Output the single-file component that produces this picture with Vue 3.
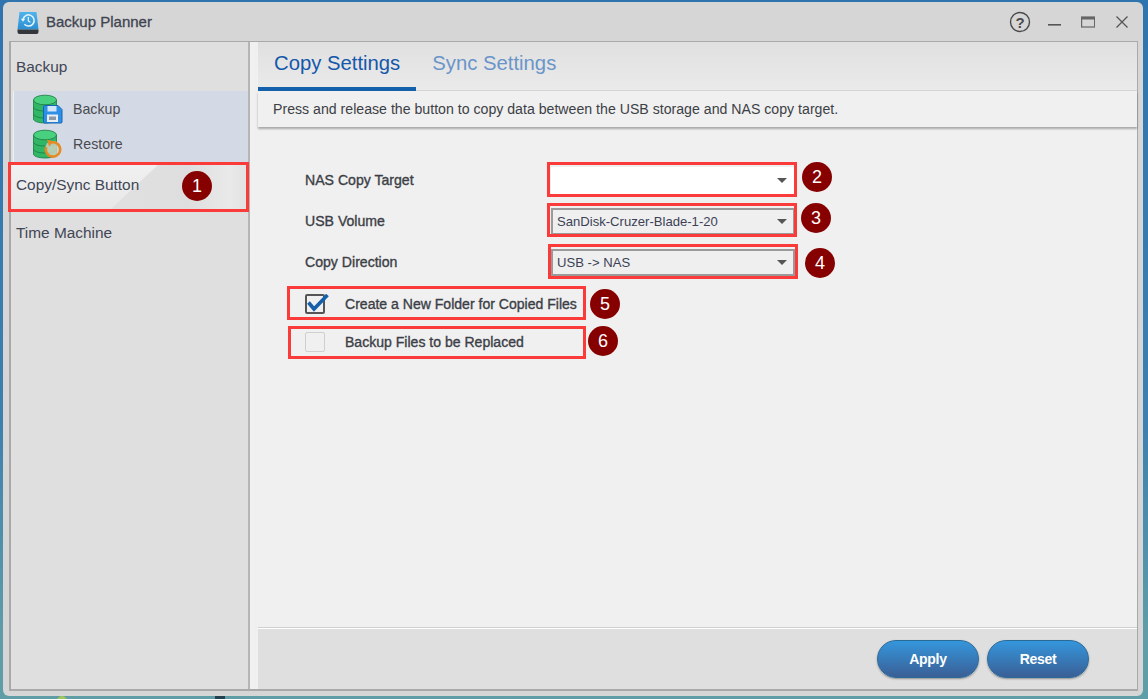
<script setup>
const rows = [
  { label: 'NAS Copy Target', value: '', blank: true },
  { label: 'USB Volume', value: 'SanDisk-Cruzer-Blade-1-20' },
  { label: 'Copy Direction', value: 'USB -> NAS' },
]
</script>

<template>
  <div class="desktop">
    <i class="deco-dot"></i>
    <i class="deco-dark"></i>
    <div class="window">
      <header class="titlebar">
        <svg class="logo" viewBox="0 0 24 24" width="24" height="24">
          <defs>
            <linearGradient id="lg" x1="0" y1="0" x2="0" y2="1"><stop offset="0" stop-color="#4fb4ec"/><stop offset="1" stop-color="#2b8ed2"/></linearGradient>
          </defs>
          <path d="M3.500 1h17l2 17.500H1.500z" fill="url(#lg)"/>
          <path d="M1.500 18.500h21v2.500a2 2 0 0 1-2 2h-17a2 2 0 0 1-2-2z" fill="#33363a"/>
          <path d="M7 8.500a5.600 5.600 0 1 1 1.400 4.800" fill="none" stroke="#e6f4fc" stroke-width="1.500"/>
          <path d="M4.800 7.800h4.400l-2.200 3z" fill="#e6f4fc"/>
          <path d="M12.300 6v3.900l2.200 1.400" fill="none" stroke="#e6f4fc" stroke-width="1.200"/>
        </svg>
        <span class="app-title">Backup Planner</span>
        <div class="controls">
          <svg class="help" width="22" height="22" viewBox="0 0 22 22"><circle cx="11" cy="11" r="9.500" fill="none" stroke="#4a4a4a" stroke-width="1.400"/><text x="11" y="16.500" text-anchor="middle" class="qmark">?</text></svg>
          <svg width="14" height="14" viewBox="0 0 14 14"><rect x="1" y="9" width="13" height="1.600" fill="#555"/></svg>
          <svg width="14" height="14" viewBox="0 0 14 14"><rect x=".6" y="2" width="13" height="10" fill="none" stroke="#666" stroke-width="1.200"/><rect x=".6" y="2" width="13" height="2.500" fill="#666"/></svg>
          <svg width="14" height="14" viewBox="0 0 14 14"><path d="M1.500 1.500l11 11M12.500 1.500l-11 11" stroke="#555" stroke-width="1.300" fill="none"/></svg>
        </div>
      </header>

      <div class="panel">
        <aside class="sidebar">
          <div class="nav-head">Backup</div>
          <div class="subnav">
            <div class="subitem">
              <svg class="db" viewBox="0 0 30 30" width="30" height="30">
                <g fill="#2fb765" stroke="#1c7a40" stroke-width=".8">
                  <path d="M.5 20v5c0 2.300 5 4 11.500 4s11.500-1.700 11.500-4v-5z"/>
                  <path d="M.5 13v7c0 2.300 5 4 11.500 4s11.500-1.700 11.500-4v-7z"/>
                  <path d="M.5 6v7c0 2.300 5 4 11.500 4s11.500-1.700 11.500-4V6z"/>
                  <ellipse cx="12" cy="6" rx="11.500" ry="4.800" fill="#49d07f"/>
                </g>
                <path d="M10.500 12.500a1 1 0 0 1 1-1h13.500l4 4v12.500a1 1 0 0 1-1 1H11.500a1 1 0 0 1-1-1z" fill="#2e8fe6" stroke="#1565b5"/>
                <rect x="14.500" y="12" width="9" height="5.500" fill="#cfe6fa"/>
                <rect x="14" y="20.500" width="11" height="7.500" fill="#e8eef3"/>
                <rect x="16" y="22.500" width="7" height="3.500" fill="#8c99a5"/>
              </svg>
              <span>Backup</span>
            </div>
            <div class="subitem">
              <svg class="db" viewBox="0 0 30 30" width="30" height="30">
                <g fill="#2fb765" stroke="#1c7a40" stroke-width=".8">
                  <path d="M.5 20v5c0 2.300 5 4 11.500 4s11.500-1.700 11.500-4v-5z"/>
                  <path d="M.5 13v7c0 2.300 5 4 11.500 4s11.500-1.700 11.500-4v-7z"/>
                  <path d="M.5 6v7c0 2.300 5 4 11.500 4s11.500-1.700 11.500-4V6z"/>
                  <ellipse cx="12" cy="6" rx="11.500" ry="4.800" fill="#49d07f"/>
                </g>
                <circle cx="20" cy="20" r="8" fill="#d8d4c8" opacity=".8"/>
                <path d="M18 13.500a7.200 7.200 0 1 1-4.800 4.500" fill="none" stroke="#e88a24" stroke-width="2.600"/>
                <path d="M14 10.500l6.500 2-4.500 5z" fill="#e88a24"/>
              </svg>
              <span>Restore</span>
            </div>
          </div>
          <div class="nav-item active">Copy/Sync Button</div>
          <div class="nav-item">Time Machine</div>
        </aside>

        <main class="content">
          <nav class="tabs">
            <div class="tab on">Copy Settings</div>
            <div class="tab">Sync Settings</div>
          </nav>
          <p class="desc">Press and release the button to copy data between the USB storage and NAS copy target.</p>

          <section class="form">
            <div v-for="r in rows" :key="r.label" class="row">
              <label>{{ r.label }}</label>
              <div class="select" :class="{ blank: r.blank }">
                <span>{{ r.value }}</span>
                <i class="caret"></i>
              </div>
            </div>
            <div class="check-row first">
              <span class="box checked">
                <svg width="26" height="22" viewBox="0 0 26 22"><path d="M3.500 8.500l5.500 6.500L22.500 1" fill="none" stroke="#1560ab" stroke-width="3.600"/></svg>
              </span>
              <span class="check-label">Create a New Folder for Copied Files</span>
            </div>
            <div class="check-row">
              <span class="box"></span>
              <span class="check-label">Backup Files to be Replaced</span>
            </div>
          </section>

          <footer class="footer">
            <button class="btn">Apply</button>
            <button class="btn">Reset</button>
          </footer>
        </main>
      </div>
    </div>

    <div class="mark r1"></div>
    <div class="mark r2"></div>
    <div class="mark r3"></div>
    <div class="mark r4"></div>
    <div class="mark r5"></div>
    <div class="mark r6"></div>
    <div class="num n1">1</div>
    <div class="num n2">2</div>
    <div class="num n3">3</div>
    <div class="num n4">4</div>
    <div class="num n5">5</div>
    <div class="num n6">6</div>
  </div>
</template>

<style>
html, body { margin: 0; padding: 0; overflow: hidden; }
</style>

<style scoped>
.desktop {
  position: relative;
  width: 1148px;
  height: 699px;
  box-sizing: border-box;
  padding: 2px 5px 3px 3px;
  background: linear-gradient(180deg, #2f74ae 0%, #3d7fae 60%, #5f9ca8 90%, #5f9ea6 100%);
  font-family: "Liberation Sans", Arial, sans-serif;
  color: #3a3f4a;
  overflow: hidden;
}
.deco-dot {
  position: absolute;
  left: 57px;
  top: 696px;
  width: 10px;
  height: 10px;
  border-radius: 50%;
  background: #a3c65a;
}
.deco-dark {
  position: absolute;
  left: 215px;
  top: 696px;
  width: 10px;
  height: 4px;
  background: #23404f;
}
.window {
  position: relative;
  height: 100%;
  box-sizing: border-box;
  display: flex;
  flex-direction: column;
  background: #d6d6d6;
  border-radius: 6px;
  padding: 0 5px 5px 6px;
}
.titlebar {
  height: 39px;
  flex: none;
  display: flex;
  align-items: center;
  padding-left: 7px;
}
.logo { margin: 2px 6px 0 0; }
.app-title {
  font-size: 15px;
  color: #3e4450;
  -webkit-text-stroke: .3px #3e4450;
}
.controls {
  margin-left: auto;
  margin-right: 9px;
  display: flex;
  align-items: center;
  gap: 20px;
}
.help { margin-right: -4px; }
.qmark { font: 700 15px "Liberation Sans", Arial, sans-serif; fill: #4a4a4a; }
.panel {
  flex: 1;
  min-height: 0;
  display: flex;
  border: 1px solid #a9a9a9;
  border-width: 1px 1px 2px 2px;
  background: #f0f0f0;
}
.sidebar {
  width: 237px;
  flex: none;
  background: #dfdfdf;
  border-right: 2px solid #b5b5b5;
}
.nav-head {
  height: 49px;
  line-height: 50px;
  padding-left: 5px;
  font-size: 15.400px;
  color: #3f4656;
}
.subnav {
  background: #d3dae5;
  height: 71px;
  margin-left: 2px;
  box-sizing: border-box;
  border-left: 1px solid #eef0f3;
}
.subitem {
  height: 35px;
  display: flex;
  align-items: center;
  padding-left: 19px;
  font-size: 14.200px;
  color: #4a4a50;
}
.subitem span { margin-left: 10px; }
.db { flex: none; }
.nav-item {
  height: 47px;
  line-height: 48px;
  padding-left: 5px;
  font-size: 15.400px;
  color: #3f4656;
}
.nav-item.active {
  position: relative;
  isolation: isolate;
  line-height: 46px;
  background: linear-gradient(90deg, #e3e3e3 0%, #dedede 75%, #e9e9e9 92%, #e2e2e2 100%);
}
.nav-item.active::before {
  content: "";
  position: absolute;
  inset: 0;
  z-index: -1;
  background: linear-gradient(180deg, #f1f1f1, #e8e8e8);
  clip-path: polygon(0 0, 150px 0, 100px 100%, 0 100%);
}
.content {
  flex: 1;
  min-width: 0;
  padding-left: 8px;
  display: flex;
  flex-direction: column;
}
.tabs {
  height: 48px;
  flex: none;
  display: flex;
  background: linear-gradient(180deg, #e0e0e0, #eaeaea);
  border-bottom: 1px solid #d5d5d5;
}
.tab {
  height: 49px;
  box-sizing: border-box;
  padding: 10px 16px 0 16px;
  font-size: 20.300px;
  color: #6a95c9;
}
.tab.on {
  color: #1458ab;
  border-bottom: 4px solid #1560ab;
}
.desc {
  margin: 0;
  height: 36px;
  flex: none;
  box-sizing: border-box;
  padding: 10px 0 0 15px;
  font-size: 14.150px;
  color: #3c3f46;
  box-shadow: 0 2px 2px rgba(0,0,0,.3);
  background: #f0f0f0;
}
.form {
  flex: 1;
  min-height: 0;
  padding: 33px 0 0 47px;
}
.row {
  height: 41px;
  display: flex;
  align-items: center;
}
.row label {
  width: 246px;
  flex: none;
  padding-bottom: 2px;
  font-size: 14.100px;
  color: #3c3f46;
  -webkit-text-stroke: .35px #3c3f46;
}
.select {
  width: 244px;
  height: 27px;
  box-sizing: border-box;
  border: 2px solid #9a9a9a;
  display: flex;
  align-items: center;
  justify-content: space-between;
  padding: 0 6px 0 4px;
  font-size: 13.100px;
  color: #3c3f56;
  background: #efefef;
}
.select.blank {
  background: #fff;
  border-color: #fff;
  box-shadow: 0 -2px 0 #efefef, 0 -3px 0 #fff;
}
.caret {
  width: 0;
  height: 0;
  border: 5px solid transparent;
  border-top: 5px solid #555;
  border-bottom: 0;
}
.check-row {
  height: 38px;
  display: flex;
  align-items: center;
}
.check-row.first { margin-top: 2px; }
.box {
  position: relative;
  width: 20px;
  height: 20px;
  box-sizing: border-box;
  border: 1px solid #cfcfcf;
  border-radius: 2px;
  margin-right: 20px;
  flex: none;
}
.box.checked { border: 2px solid #555; }
.box svg { position: absolute; left: -2px; top: -2px; }
.check-label {
  font-size: 14.050px;
  color: #3c3f46;
  -webkit-text-stroke: .35px #3c3f46;
}
.footer {
  height: 61px;
  flex: none;
  display: flex;
  justify-content: flex-end;
  align-items: center;
  gap: 8px;
  padding-right: 48px;
  background: #dfdfdf;
  border-top: 1px solid #cfcfcf;
  box-shadow: inset 0 1px 0 #fff;
}
.btn {
  width: 102px;
  height: 38px;
  border: 1px solid #2a6a99;
  border-radius: 19px;
  background: linear-gradient(180deg, #3596dc, #3a5f96);
  color: #fff;
  font: 700 14px "Liberation Sans", Arial, sans-serif;
  letter-spacing: -.3px;
  box-shadow: 0 1px 2px rgba(0,0,0,.35);
  padding: 0;
}
.mark {
  position: absolute;
  box-sizing: border-box;
  border: 3px solid #fb3a3a;
}
.r1 { left: 8px; top: 162px; width: 241px; height: 50px; }
.r2 { left: 547px; top: 162px; width: 250px; height: 35px; }
.r3 { left: 547px; top: 203px; width: 250px; height: 34px; }
.r4 { left: 548px; top: 244px; width: 250px; height: 35px; }
.r5 { left: 287px; top: 286px; width: 299px; height: 34px; }
.r6 { left: 288px; top: 326px; width: 298px; height: 33px; }
.num {
  position: absolute;
  width: 30px;
  height: 30px;
  border-radius: 50%;
  background: #870000;
  color: #fff;
  font-size: 18px;
  line-height: 30px;
  text-align: center;
}
.n1 { left: 182px; top: 171px; }
.n2 { left: 802px; top: 162px; }
.n3 { left: 801px; top: 203px; }
.n4 { left: 805px; top: 248px; }
.n5 { left: 590px; top: 289px; }
.n6 { left: 588px; top: 326px; }
</style>
